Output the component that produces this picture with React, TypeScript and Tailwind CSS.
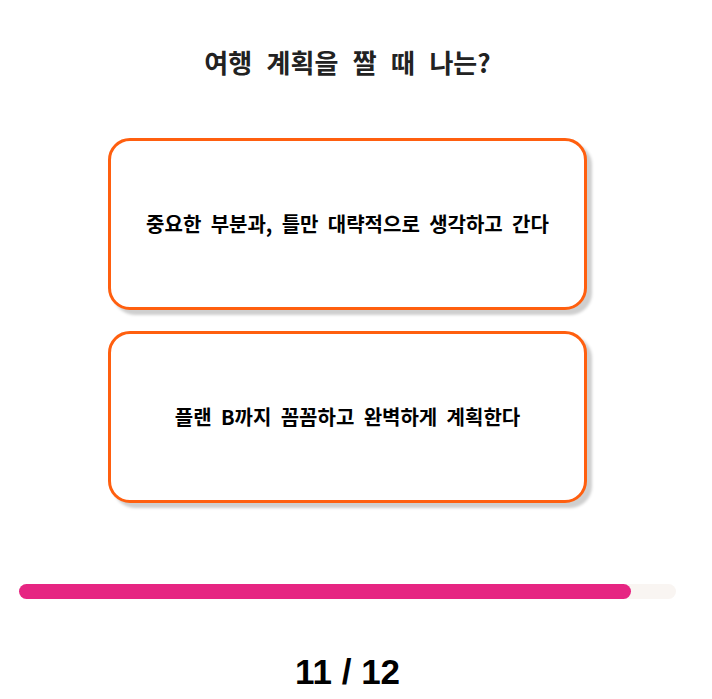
const options = [
  '중요한 부분과, 틀만 대략적으로 생각하고 간다',
  '플랜 B까지 꼼꼼하고 완벽하게 계획한다',
];

export default function App() {
  const current = 11;
  const total = 12;

  return (
    <div className="w-[695px] bg-white font-['Noto_Sans_CJK_KR',sans-serif]">
      <h1 className="pt-[44px] text-center text-[26px] font-bold leading-[36px] text-[#222] [word-spacing:8.5px]">
        여행 계획을 짤 때 나는?
      </h1>

      <div className="mt-[58px] flex flex-col items-center gap-[21px]">
        {options.map((label) => (
          <button
            key={label}
            className="flex h-[172px] w-[479px] items-center justify-center rounded-[22px] border-[3px] border-[#ff5f0f] bg-white shadow-[5px_5px_3px_#cfcfcf]"
          >
            <span className="text-[20px] font-bold text-black [word-spacing:4.8px]">{label}</span>
          </button>
        ))}
      </div>

      <div className="mx-[19px] mt-[81px] h-[15px] rounded-full bg-[#f9f5f2]">
        <div className="h-full w-[612px] rounded-full bg-[#e62582]" />
      </div>

      <p className="mt-[53px] text-center font-['Liberation_Sans',sans-serif] text-[35px] font-bold leading-[40px] text-black">
        {current} / {total}
      </p>
    </div>
  );
}
